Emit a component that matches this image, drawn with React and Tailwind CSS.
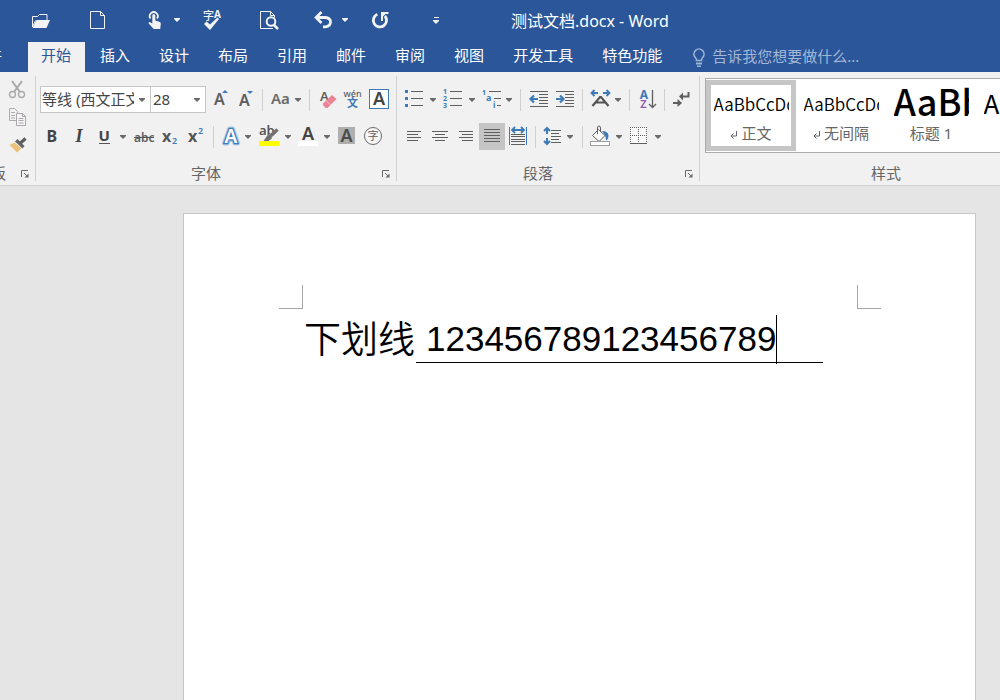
import React from 'react';

const GREY = '#5f5f5f';
const BLUE = '#3f7ab8';
const UI = "'Noto Sans','Noto Sans CJK SC',sans-serif";

function Glyph({ box, children }) {
  const [, , w, h] = box.split(' ');
  return (
    <svg width={w} height={h} viewBox={box} className="block shrink-0" fill="none" aria-hidden="true">
      {children}
    </svg>
  );
}

function Tool({ label, box, active, children }) {
  return (
    <button
      type="button"
      aria-label={label}
      title={label}
      className={active ? 'shrink-0 bg-[#c5c5c5]' : 'shrink-0 hover:bg-[#dcdcdc]'}
    >
      <Glyph box={box}>{children}</Glyph>
    </button>
  );
}

function Arrow({ label, width = 'w-3', light }) {
  return (
    <button type="button" aria-label={label} className={`flex shrink-0 items-center justify-center self-stretch ${width}`}>
      <svg width="6" height="4" viewBox="0 0 6 4" aria-hidden="true">
        <path d="M0 0h6v1L3 4 0 1z" fill={light ? '#f3f3f3' : '#6a6a6a'} />
      </svg>
    </button>
  );
}

function Divider({ width = 'w-2' }) {
  return (
    <span className={`flex shrink-0 justify-center ${width}`}>
      <span className="h-[22px] w-px bg-[#d0d0d0]" />
    </span>
  );
}

function Letter({ x, y, size, weight = 400, fill = GREY, children, ...rest }) {
  return (
    <text x={x} y={y} fontSize={size} fontWeight={weight} fill={fill} fontFamily={UI} {...rest}>
      {children}
    </text>
  );
}

function Launcher({ label }) {
  return (
    <button type="button" aria-label={label} className="flex h-[23px] w-5 shrink-0 items-center justify-center">
      <svg width="8" height="8" viewBox="0 0 8 8" fill="none" aria-hidden="true">
        <path d="M.5 7V.5H7M3 3l3.5 3.5" stroke="#6a6a6a" />
        <path d="M7.5 3.5v4h-4z" fill="#6a6a6a" />
      </svg>
    </button>
  );
}

function GroupFooter({ name }) {
  return (
    <div className="mt-auto flex h-[23px] items-center">
      <span className="flex-1 pb-0.5 text-center text-[15px] leading-5 text-[#666]">{name}</span>
      <Launcher label={`${name}设置`} />
    </div>
  );
}

function GroupLine() {
  return <span className="my-1 w-px shrink-0 bg-[#d0d0d0]" />;
}

function TitleBar() {
  const slot = 'flex h-10 w-[57px] shrink-0 items-center justify-center';
  return (
    <div className="flex h-10 items-center overflow-hidden pl-3">
      <button type="button" aria-label="打开" className={slot}>
        <Glyph box="31 11 20 17">
          <path d="M32.500 26V15.500h5l2-2h7.500V19M32.500 26l3-6.500" stroke="#f3f3f3" />
          <path d="M36.500 19H50l-3.500 8H32.500z" fill="#f3f3f3" />
        </Glyph>
      </button>
      <button type="button" aria-label="新建" className={slot}>
        <Glyph box="90 10 17 20">
          <path d="M91.500 11.500h10l4 4v13h-14z" stroke="#f3f3f3" />
          <path d="M101.500 11.500v4h4" stroke="#f3f3f3" />
        </Glyph>
      </button>
      <div className="flex h-10 w-[57px] shrink-0 items-center justify-end">
        <button type="button" aria-label="触摸/鼠标模式" className="flex w-8 justify-center">
          <Glyph box="146 10 16 19">
            <path d="M149.500 17.500a4 4 0 1 1 6.500 0" stroke="#f3f3f3" strokeWidth="1.800" />
            <path d="M151.300 14.500a1.500 1.500 0 0 1 3 0v5l4 1.200q1.700.5 1.500 2.300l-.6 5h-6.500l-5-5.500q-.6-1.500 1-1.500l2.600 1.500z" fill="#f3f3f3" />
          </Glyph>
        </button>
        <Arrow light label="触摸选项" />
      </div>
      <button type="button" aria-label="拼写和语法" className={slot}>
        <Glyph box="202 9 20 22">
          <Letter x="203" y="20" size="11" fill="#f3f3f3" weight="500">字</Letter>
          <Letter x="214" y="18" size="10" fill="#f3f3f3" weight="700">A</Letter>
          <path d="M204 24l2.500-2.500 3.500 3 7.500-7 1.500 1.500-9 11z" fill="#f3f3f3" />
        </Glyph>
      </button>
      <button type="button" aria-label="打印预览" className={slot}>
        <Glyph box="259 10 20 20">
          <path d="M273 28.500h-12.500v-17h10l4 4v2M270.500 11.500v4h4" stroke="#f3f3f3" />
          <circle cx="271" cy="21.500" r="4.300" stroke="#f3f3f3" strokeWidth="2" />
          <path d="M274 25l4 4" stroke="#f3f3f3" strokeWidth="2.500" />
        </Glyph>
      </button>
      <div className="flex h-10 w-[54px] shrink-0 items-center justify-end">
        <button type="button" aria-label="撤消" className="flex w-8 justify-center">
          <Glyph box="313 11 19 18">
            <path d="M315 17.500h9q5.500.3 5.500 4.500t-5 4.800h-2.500" stroke="#f3f3f3" strokeWidth="2.800" />
            <path d="M320.500 12l-5.500 5.500 5.500 5.500" stroke="#f3f3f3" strokeWidth="2.600" />
          </Glyph>
        </button>
        <Arrow light label="撤消选项" />
      </div>
      <button type="button" aria-label="重复" className={slot}>
        <Glyph box="371 11 18 18">
          <path d="M377.300 14.300a6.600 6.600 0 1 0 7.600 1.700" stroke="#f3f3f3" strokeWidth="2.800" />
          <path d="M381 12h7.500v2h-3l-2.500 2.500V21H381z" fill="#f3f3f3" />
        </Glyph>
      </button>
      <button type="button" aria-label="自定义快速访问工具栏" className={slot}>
        <Glyph box="433 16 7 8">
          <path d="M434 17.500h5" stroke="#f3f3f3" />
          <path d="M433 20h6v1l-3 3-3-3z" fill="#f3f3f3" />
        </Glyph>
      </button>
      <h1 className="ml-[46px] pt-0.5 text-[16px] leading-5 whitespace-nowrap">测试文档.docx - Word</h1>
    </div>
  );
}

const tabs = ['插入', '设计', '布局', '引用', '邮件', '审阅', '视图', '开发工具', '特色功能'];

function TabBar() {
  return (
    <div className="mt-0.5 flex h-[30px] overflow-hidden text-[15px] leading-[26px] whitespace-nowrap">
      <button type="button" className="flex w-7 shrink-0 justify-end overflow-hidden pr-[26px] pb-1">
        <span className="shrink-0">文件</span>
      </button>
      <nav className="flex shrink-0 gap-px">
        <button type="button" aria-current="page" className="bg-[#f1f1f1] pr-3.5 pb-1 pl-[13px] text-[#2b579a]">
          开始
        </button>
        {tabs.map((t) => (
          <button type="button" key={t} className="px-3.5 pb-1">
            {t}
          </button>
        ))}
      </nav>
      <label className="flex min-w-0 flex-1 items-center gap-1.5 pl-4">
        <Glyph box="692 46 14 21">
          <path d="M696.500 59.500q0-2-1.500-3.500a5 5 0 1 1 8 0q-1.500 1.500-1.500 3.500z" stroke="#9fb3d3" strokeWidth="1.600" />
          <path d="M696 61.500h6v2h-6zM697 64.500h4v1.500h-4z" fill="#9fb3d3" />
        </Glyph>
        <input
          aria-label="告诉我您想要做什么"
          placeholder="告诉我您想要做什么..."
          className="w-full min-w-0 bg-transparent pb-0.5 outline-none placeholder:text-[#a3b6d5]"
        />
      </label>
    </div>
  );
}

function ClipboardGroup() {
  return (
    <section className="flex w-[35px] shrink-0 flex-col overflow-hidden pt-1">
      <div className="flex flex-col pl-1">
        <Tool label="剪切" box="4 76 28 27">
          <path d="M12 81l8 11M22 81l-8 11" stroke="#a9a9a9" strokeWidth="2" />
          <circle cx="12.500" cy="94.500" r="3" stroke="#aaa" strokeWidth="1.400" />
          <circle cx="21.500" cy="94.500" r="3" stroke="#aaa" strokeWidth="1.400" />
        </Tool>
        <Tool label="复制" box="4 103 28 27">
          <path d="M9.500 108.500h5l3 3v9h-8zM11 112.500h4M11 115.500h4M11 118h4" stroke="#b0abb2" />
          <path d="M16.500 113.500h6l3 3v9h-9z" fill="#f6f6f6" stroke="#aaa5ac" />
          <path d="M22.500 113.500v3h3M18.500 118.500h5M18.500 120.500h5M18.500 123h5" stroke="#aaa5ac" />
        </Tool>
        <Tool label="格式刷" box="4 130 28 27">
          <path d="M9.500 145l5-2.500 7 6-4.500 4z" fill="#ecc07d" />
          <path d="M15 141.500l7.500 7 2-2.500-7-7z" fill="#666" />
          <path d="M20.500 143l5-4.500" stroke="#5c5c5c" strokeWidth="3.200" />
        </Tool>
      </div>
      <div className="mt-auto flex h-[23px] items-center justify-end">
        <span className="mr-[9px] shrink-0 pb-0.5 text-[15px] leading-5 text-[#666]">剪贴板</span>
        <Launcher label="剪贴板设置" />
      </div>
    </section>
  );
}

function FontGroup() {
  return (
    <section className="flex w-[360px] shrink-0 flex-col pt-3.5">
      <div className="flex h-[27px] items-center pl-1">
        <div className="flex h-[27px] w-[111px] shrink-0 items-center border border-[#c6c6c6] bg-white">
          <input aria-label="字体" defaultValue="等线 (西文正文)" className="ml-px w-[92px] pb-0.5 text-[15px] leading-6 text-[#444] outline-none" />
          <Arrow label="选择字体" width="w-4" />
        </div>
        <div className="-ml-px flex h-[27px] w-14 shrink-0 items-center border border-[#c6c6c6] bg-white">
          <input aria-label="字号" defaultValue="28" className="ml-0.5 w-9 pb-0.5 text-[15px] leading-6 text-[#444] outline-none" />
          <Arrow label="选择字号" width="w-4" />
        </div>
        <Tool label="增大字号" box="206 86 27 27">
          <Letter x="214" y="105" size="16" weight="600">A</Letter>
          <path d="M222 93l3-3 3 3z" fill={BLUE} />
        </Tool>
        <Tool label="减小字号" box="233 86 25 27">
          <Letter x="239" y="106" size="16" weight="600">A</Letter>
          <path d="M247 91h6l-3 3z" fill={BLUE} />
        </Tool>
        <Divider />
        <Tool label="更改大小写" box="266 86 26 27">
          <Letter x="271" y="104" size="15" weight="600" fill="#6a6a6a">Aa</Letter>
        </Tool>
        <Arrow label="大小写选项" />
        <Divider width="w-[11px]" />
        <Tool label="清除格式" box="315 86 25 27">
          <Letter x="320" y="101" size="13" weight="600">A</Letter>
          <path d="M323 103.500l9-8.500 4.500 4-9 9h-2l-2.500-3z" fill="#e98395" />
          <path d="M326 100.500l4.500 4.500" stroke="#f6c1c9" />
        </Tool>
        <Tool label="拼音指南" box="340 86 25 27">
          <Letter x="352.500" y="97" size="9" weight="500" textAnchor="middle">wén</Letter>
          <Letter x="347" y="107" size="11" weight="700" fill={BLUE}>文</Letter>
        </Tool>
        <Tool label="字符边框" box="365 86 27 27">
          <rect x="369.500" y="89.500" width="19" height="19" fill="#fff" stroke={BLUE} />
          <Letter x="379" y="105" size="18" weight="600" fill="#444" textAnchor="middle">A</Letter>
        </Tool>
      </div>
      <div className="mt-2.5 flex h-[27px] items-center pl-1">
        <Tool label="加粗" box="40 123 25 27">
          <Letter x="46.500" y="142" size="16" weight="700" fill="#444">B</Letter>
        </Tool>
        <Tool label="倾斜" box="65 123 27 27">
          <text x="79" y="142" fontSize="18" fontWeight="700" fontStyle="italic" textAnchor="middle" fontFamily="'Liberation Serif',serif" fill="#444">I</text>
        </Tool>
        <Tool label="下划线" box="92 123 25 27">
          <Letter x="98.500" y="141" size="15" weight="700" fill="#444">U</Letter>
          <path d="M99 143.500h11" stroke="#555" />
        </Tool>
        <Arrow label="下划线选项" />
        <Tool label="删除线" box="129 123 29 27">
          <Letter x="134" y="142" size="12" weight="600">abc</Letter>
          <path d="M134 137.500h20" stroke="#555" />
        </Tool>
        <Tool label="下标" box="158 123 25 27">
          <Letter x="162" y="142" size="16" weight="700" fill="#555">x</Letter>
          <Letter x="172" y="144" size="9" weight="600" fill={BLUE}>2</Letter>
        </Tool>
        <Tool label="上标" box="183 123 25 27">
          <Letter x="188" y="142" size="16" weight="700" fill="#555">x</Letter>
          <Letter x="198" y="134" size="9" weight="600" fill={BLUE}>2</Letter>
        </Tool>
        <Divider width="w-[10px]" />
        <Tool label="文本效果" box="218 123 24 27">
          <Letter x="231" y="143" size="19" weight="600" fill="#fff" textAnchor="middle" stroke="#a9cbea" strokeWidth="5" strokeLinejoin="round" paintOrder="stroke">A</Letter>
          <Letter x="231" y="143" size="19" weight="600" fill="#fff" textAnchor="middle" stroke={BLUE} strokeWidth="2.500" paintOrder="stroke">A</Letter>
        </Tool>
        <Arrow label="文本效果选项" />
        <Tool label="突出显示" box="254 123 28 27">
          <Letter x="259" y="135" size="13" weight="600" fill="#555">ab</Letter>
          <path d="M277.500 129.500l-8 7.500" stroke="#707070" strokeWidth="3.500" />
          <path d="M268 134.500l4 4-3.500 2.500h-5z" fill="#707070" />
          <path d="M259 141h20v5h-20z" fill="#ff0" />
        </Tool>
        <Arrow label="突出显示颜色" />
        <Tool label="字体颜色" box="294 123 27 27">
          <Letter x="308" y="140" size="18" weight="600" fill="#444" textAnchor="middle">A</Letter>
          <path d="M298 141h20v5h-20z" fill="#fff" />
        </Tool>
        <Arrow label="字体颜色选项" />
        <Tool label="字符底纹" box="333 123 27 27">
          <path d="M338 127h17v17h-17z" fill="#aeaeae" />
          <Letter x="346.500" y="142" size="18" weight="600" fill="#4c4c4c" textAnchor="middle">A</Letter>
        </Tool>
        <Tool label="带圈字符" box="360 123 26 27">
          <circle cx="373" cy="136" r="8.500" fill="#f8f8f8" stroke="#6a6a6a" />
          <Letter x="373" y="140" size="11" textAnchor="middle">字</Letter>
        </Tool>
      </div>
      <GroupFooter name="字体" />
    </section>
  );
}

function ParagraphGroup() {
  return (
    <section className="flex w-[302px] shrink-0 flex-col pt-3.5">
      <div className="flex h-[27px] items-center pl-1">
        <Tool label="项目符号" box="401 86 26 27">
          <path d="M411 91.500h12M411 98.500h12M411 105.500h12" stroke={GREY} />
          <path d="M405 90h3v3h-3zM405 97h3v3h-3zM405 104h3v3h-3z" fill={BLUE} />
        </Tool>
        <Arrow label="项目符号选项" />
        <Tool label="编号" box="439 86 27 27">
          <path d="M450 91.500h12M450 98.500h12M450 105.500h12" stroke={GREY} />
          <Letter x="443" y="94" size="7" weight="700" fill={BLUE}>1</Letter>
          <Letter x="443" y="101" size="7" weight="700" fill={BLUE}>2</Letter>
          <Letter x="443" y="108" size="7" weight="700" fill={BLUE}>3</Letter>
        </Tool>
        <Arrow label="编号选项" />
        <Tool label="多级列表" box="478 86 25 27">
          <path d="M489 91.500h12M494 98.500h7M497 105.500h4" stroke={GREY} />
          <Letter x="482" y="95" size="7" weight="700" fill={BLUE}>1</Letter>
          <Letter x="486" y="101" size="9" weight="700" fill={BLUE}>a</Letter>
          <Letter x="493" y="108" size="8" weight="700" fill={BLUE}>i</Letter>
        </Tool>
        <Arrow label="多级列表选项" />
        <Divider width="w-[11px]" />
        <Tool label="减少缩进量" box="526 86 26 27">
          <path d="M530 91.500h18M539 94.500h9M539 97.500h9M539 100.500h9M539 103.500h9M530 106.500h18" stroke={GREY} />
          <path d="M538 99h-7M534 95.500L530.500 99l3.500 3.500" stroke={BLUE} strokeWidth="2.200" />
        </Tool>
        <Tool label="增加缩进量" box="552 86 26 27">
          <path d="M556 91.500h18M565 94.500h9M565 97.500h9M565 100.500h9M565 103.500h9M556 106.500h18" stroke={GREY} />
          <path d="M556 99h7M560 95.500l3.500 3.500-3.500 3.500" stroke={BLUE} strokeWidth="2.200" />
        </Tool>
        <Divider />
        <Tool label="中文版式" box="586 86 26 27">
          <path d="M592 93h6M603 93h6M594.500 90l-3 3 3 3M606.500 90l3 3-3 3" stroke={BLUE} strokeWidth="1.800" />
          <path d="M592.500 106l7.500-9h1l7.500 9M596 102.500h9" stroke="#555" strokeWidth="2.200" />
        </Tool>
        <Arrow label="中文版式选项" />
        <Divider width="w-[10px]" />
        <Tool label="排序" box="634 86 26 27">
          <Letter x="644" y="99" size="12" weight="700" fill={BLUE} textAnchor="middle">A</Letter>
          <Letter x="643.500" y="108" size="11" weight="600" fill="#9356b0" textAnchor="middle">Z</Letter>
          <path d="M652.500 90v16.500M649 104l3.500 3.500 3.500-3.500" stroke={GREY} strokeWidth="1.300" />
        </Tool>
        <Divider />
        <Tool label="显示编辑标记" box="668 86 26 27">
          <path d="M688.500 92v4.500h-6M673 103h6" stroke={GREY} strokeWidth="2" />
          <path d="M679 96.500l4-4v8zM682 103l-4.500-4v8z" fill={GREY} />
        </Tool>
      </div>
      <div className="mt-2.5 flex h-[27px] items-center pl-1">
        <Tool label="左对齐" box="401 123 26 27">
          <path d="M407 131.500h14M407 134.500h11M407 137.500h14M407 140.500h11" stroke={GREY} />
        </Tool>
        <Tool label="居中" box="427 123 26 27">
          <path d="M432 131.500h16M435 134.500h10M432 137.500h16M435 140.500h10" stroke={GREY} />
        </Tool>
        <Tool label="右对齐" box="453 123 26 27">
          <path d="M459 131.500h14M462 134.500h11M459 137.500h14M462 140.500h11" stroke={GREY} />
        </Tool>
        <Tool label="两端对齐" active box="479 123 26 27">
          <path d="M484 129.500h16M484 132.500h16M484 135.500h16M484 138.500h16M484 141.500h16" stroke={GREY} />
        </Tool>
        <Tool label="分散对齐" box="505 123 26 27">
          <path d="M509.500 127v18M526.500 127v18" stroke={BLUE} />
          <path d="M512 130h12M515 127l-3 3 3 3M521 127l3 3-3 3" stroke={BLUE} strokeWidth="1.800" />
          <path d="M511 134.500h14M511 136.500h14M511 139.500h14M511 141.500h14M511 144.500h14" stroke={GREY} />
        </Tool>
        <Divider />
        <Tool label="行距" box="539 123 25 27">
          <path d="M547 128v6M547 138v6M544 131l3-3 3 3M544 141l3 3 3-3" stroke={BLUE} strokeWidth="2" />
          <path d="M551 130.500h10M551 133.500h8M551 136.500h10M551 139.500h8M551 142.500h10" stroke={GREY} />
        </Tool>
        <Arrow label="行距选项" />
        <Divider width="w-[13px]" />
        <Tool label="底纹" box="589 123 24 27">
          <path d="M592.500 135.500l6-6 6.500 6-6 6z" fill="#fafafa" stroke={GREY} />
          <path d="M597.500 134v-6q0-2 1.500-2t1.500 2v4" stroke={GREY} />
          <path d="M602 131q6 0 6.500 4.500 0 4-2.500 5 0-5-4-9.500z" fill={BLUE} />
          <rect x="590.500" y="141.500" width="19" height="4" fill="#fff" stroke="#a0a0a0" />
        </Tool>
        <Arrow label="底纹颜色" />
        <Tool label="边框" box="625 123 27 27">
          <path d="M630 127h17v16h-17z" fill="#fafafa" />
          <path d="M630 127.500h17M630 135.500h17M630.500 127v16M638.500 127v16M646.500 127v16" stroke={GREY} strokeDasharray="1 1" />
          <path d="M630 143.500h17" stroke={GREY} />
        </Tool>
        <Arrow label="边框选项" />
      </div>
      <GroupFooter name="段落" />
    </section>
  );
}

const styles = [
  { name: '正文', mark: true, sample: 'AaBbCcDd', selected: true },
  { name: '无间隔', mark: true, sample: 'AaBbCcDd' },
  { name: '标题 1', sample: 'AaBb', size: 'big' },
  { name: '标题 2', sample: 'AaBbC', size: 'medium' },
];

const sampleSizes = {
  small: 'text-[17px] leading-[38px] font-[350]',
  medium: 'text-[26px] leading-[36px]',
  big: 'text-[36px] leading-[30px] font-medium',
};

function StyleCard({ name, mark, sample, selected, size = 'small' }) {
  return (
    <button
      type="button"
      aria-pressed={!!selected}
      className={`flex h-[71px] w-[90px] shrink-0 flex-col items-center border-[5px] ${selected ? 'border-[#c6c6c6]' : 'border-transparent'}`}
    >
      <span className={`h-[38px] w-[75px] overflow-hidden text-left whitespace-nowrap text-black ${sampleSizes[size]} font-['Noto_Sans_CJK_SC',sans-serif]`}>
        {sample}
      </span>
      <span className="flex items-center gap-1 text-[15px] leading-5 whitespace-nowrap text-[#666]">
        {mark && (
          <svg width="7" height="8" viewBox="0 0 7 8" fill="none" className="mt-1" aria-hidden="true">
            <path d="M6.500 0v5H1M3.500 2.500L1 5l2.500 2.500" stroke="#666" />
          </svg>
        )}
        {name}
      </span>
    </button>
  );
}

function StylesGroup() {
  return (
    <section className="flex w-[392px] shrink-0 flex-col pt-1.5">
      <div className="ml-[5px] flex h-[75px] overflow-hidden border border-[#ababab] bg-white pt-px">
        {styles.map((s) => (
          <StyleCard key={s.name} {...s} />
        ))}
      </div>
      <GroupFooter name="样式" />
    </section>
  );
}

function Page() {
  return (
    <main className="flex flex-1 bg-[#e5e5e5] pt-[27px] pr-6 pl-[183px]">
      <article className="flex-1 border border-b-0 border-[#c6c6c6] bg-white pt-[71px] pr-[94px] pl-[95px]">
        <div className="flex justify-between">
          <span className="size-6 border-r border-b border-[#a6a6a6]" />
          <span className="size-6 border-b border-l border-[#a6a6a6]" />
        </div>
        <p className="mt-1.5 ml-[25px] flex font-['Noto_Sans_CJK_SC',sans-serif] text-[37px] leading-[44px] font-[350] whitespace-nowrap text-black">
          <span className="w-28">下划线</span>
          <span className="flex h-12 w-[407px] border-b border-black pl-2.5 font-['Liberation_Sans',sans-serif] text-[35px] leading-[48px]">
            123456789123456789
            <span className="-mb-0.5 w-px bg-black" />
          </span>
        </p>
      </article>
    </main>
  );
}

export default function App() {
  return (
    <div className="flex min-h-screen flex-col overflow-hidden font-['Noto_Sans','Noto_Sans_CJK_SC',sans-serif]">
      <header className="bg-[#2b579a] text-white">
        <TitleBar />
        <TabBar />
      </header>
      <div className="flex h-[114px] overflow-hidden border-b border-[#d0d0d0] bg-[#f1f1f1]">
        <ClipboardGroup />
        <GroupLine />
        <FontGroup />
        <GroupLine />
        <ParagraphGroup />
        <GroupLine />
        <StylesGroup />
      </div>
      <Page />
    </div>
  );
}
